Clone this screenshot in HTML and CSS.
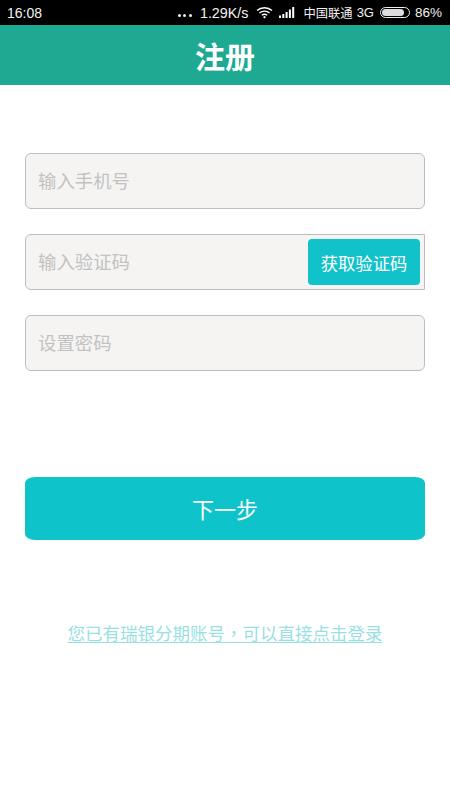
FILE: index.html
```html
<!DOCTYPE html>
<html lang="zh-CN">

<head>
    <meta charset="UTF-8">
    <meta name="viewport" content="width=device-width, initial-scale=1.0">
    <title>注册</title>
    <link rel="stylesheet" href="styles.css">
</head>

<body>
    <div class="status-bar">
        <span class="status-time">16:08</span>
        <div class="status-right">
            <span class="status-dots"><i></i><i></i><i></i></span>
            <span class="status-speed">1.29K/s</span>
            <svg class="icon-wifi" width="17" height="13" viewBox="0 0 17 13" fill="none" stroke="#fff" stroke-width="1.3">
                <path d="M1 4.6C5.3 .8 11.7 .8 16 4.6" />
                <path d="M3.4 7C6.3 4.5 10.7 4.5 13.6 7" />
                <path d="M5.8 9.3C7.3 8.1 9.7 8.1 11.2 9.3" />
                <path d="M8.5 12.6L7 11l1.5-1 1.5 1z" fill="#fff" stroke="none" />
            </svg>
            <svg class="icon-signal" width="16" height="11" viewBox="0 0 16 11" fill="#fff">
                <rect x="0" y="8.5" width="2" height="2.5" />
                <rect x="3.3" y="7" width="2" height="4" />
                <rect x="6.6" y="5" width="2" height="6" />
                <rect x="9.9" y="2.5" width="2" height="8.5" />
                <rect x="13.2" y="0" width="2" height="11" />
            </svg>
            <span class="status-carrier">中国联通</span>
            <span class="status-network">3G</span>
            <span class="battery"><span class="battery-level"></span></span>
            <span class="status-percent">86%</span>
        </div>
    </div>

    <header class="title-bar">注册</header>

    <form class="register-form">
        <div class="field">
            <input class="field-input" type="text" placeholder="输入手机号">
        </div>
        <div class="field field-code">
            <input class="field-input" type="text" placeholder="输入验证码">
            <button class="code-btn" type="button">获取验证码</button>
        </div>
        <div class="field">
            <input class="field-input" type="password" placeholder="设置密码">
        </div>
        <button class="next-btn" type="button">下一步</button>
        <a class="login-link" href="#">您已有瑞银分期账号<span class="login-comma" lang="zh-TW">，</span>可以直接点击登录</a>
    </form>
</body>

</html>
```

FILE: styles.css
```css
* {
    box-sizing: border-box;
}

body {
    margin: 0;
    background: #fff;
    font-family: "Liberation Sans", "Noto Sans CJK SC", sans-serif;
}

.status-bar {
    height: 25px;
    background: #000;
    color: #f2f2f2;
    font-size: 14px;
    display: flex;
    justify-content: space-between;
    align-items: center;
    padding: 0 8px 0 7px;
}

.status-right {
    display: flex;
    align-items: center;
}

.status-dots {
    display: flex;
    gap: 2.5px;
    margin-top: 5px;
    margin-right: 8px;
}

.status-dots i {
    width: 3px;
    height: 3px;
    border-radius: 50%;
    background: #eee;
}

.status-speed {
    font-size: 14.3px;
    margin-right: 8px;
}

.icon-wifi {
    margin-right: 6px;
}

.icon-signal {
    margin-right: 8px;
}

.status-carrier {
    font-size: 12.3px;
    margin-right: 4px;
}

.status-network {
    font-size: 13px;
    margin-right: 6px;
}

.battery {
    width: 30px;
    height: 11px;
    border: 1px solid #eee;
    border-radius: 6px;
    padding: 1px;
    margin-right: 5px;
    display: flex;
}

.battery-level {
    width: 86%;
    background: #ddd;
    border-radius: 4px;
}

.status-percent {
    font-size: 13.5px;
}

.title-bar {
    height: 60px;
    background: #1ea993;
    color: #fff;
    font-size: 30px;
    font-weight: bold;
    display: flex;
    justify-content: center;
    align-items: center;
}

.register-form {
    padding: 68px 25px 0;
    display: flex;
    flex-direction: column;
}

.field {
    height: 56px;
    margin-bottom: 25px;
    background: #f5f4f2;
    border: 1px solid #bdbdbd;
    border-radius: 6px;
    display: flex;
    align-items: center;
}

.field-code {
    border-radius: 6px 0 0 6px;
    padding-right: 4px;
}

.field-input {
    flex: 1;
    min-width: 0;
    height: 100%;
    border: none;
    background: none;
    outline: none;
    padding: 2px 12px 0;
    font-family: inherit;
    font-size: 18.4px;
}

.field-input::placeholder {
    color: #c2c2c2;
    opacity: 1;
}

.code-btn {
    width: 112px;
    height: 46px;
    border: none;
    border-radius: 4px;
    background: #12c2ca;
    color: #fff;
    font-family: inherit;
    font-size: 17.3px;
}

.next-btn {
    height: 63px;
    margin-top: 81px;
    padding: 0 0 2px;
    border: none;
    border-radius: 10px / 6px;
    background: #0fc3cb;
    color: #fff;
    font-family: inherit;
    font-size: 22px;
}

.login-link {
    margin-top: 80px;
    text-align: center;
    color: #9adfe3;
    font-size: 17.5px;
    text-underline-offset: 2px;
}

/* TC font centres the comma in its cell */
.login-comma {
    font-family: "Noto Sans CJK TC", sans-serif;
}
```
